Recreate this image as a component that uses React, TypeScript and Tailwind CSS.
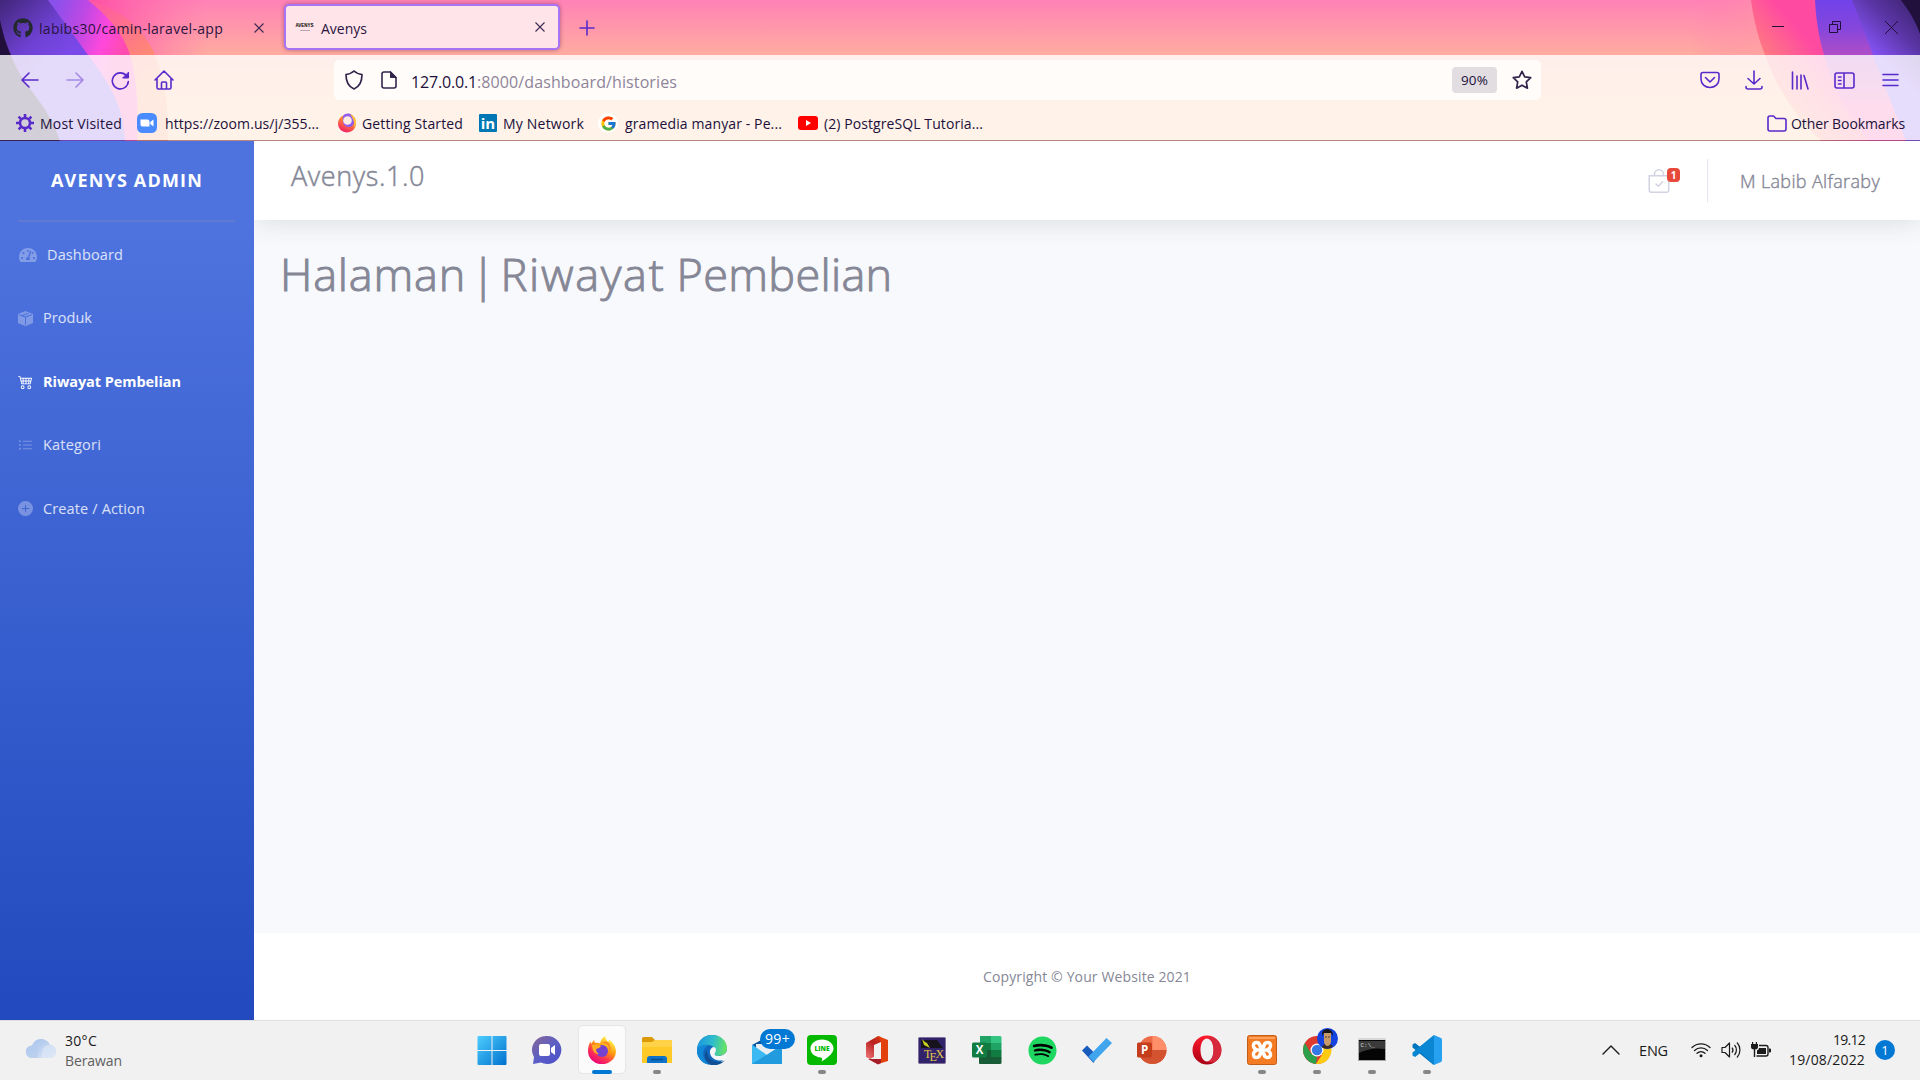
import { useLayoutEffect, useRef, type ReactNode } from "react";
import { FaGithub, FaSpotify, FaTachometerAlt } from "react-icons/fa";
import { BsBagCheck, BsBoxSeamFill, BsCart4, BsListUl, BsPlusCircleFill } from "react-icons/bs";
import { FcGoogle } from "react-icons/fc";

/* Spreads a single line of text over the width that its class gives it. */
function Fit({ children, className = "" }: { children: string; className?: string }) {
  const ref = useRef<HTMLSpanElement>(null);
  useLayoutEffect(() => {
    const inner = ref.current;
    const box = inner?.parentElement;
    if (!inner || !box) return;
    inner.style.letterSpacing = "0px";
    const gap = box.getBoundingClientRect().width - inner.getBoundingClientRect().width;
    inner.style.letterSpacing = `${gap / Math.max(1, children.length)}px`;
  }, [children]);
  return (
    <span className={`block shrink-0 whitespace-nowrap ${className}`}>
      <span ref={ref} className="inline-block">{children}</span>
    </span>
  );
}

function Wallpaper() {
  return (
    <svg className="absolute inset-0" width="1920" height="141" viewBox="0 0 1920 141">
      <defs>
        <linearGradient id="sky" x1="0" y1="0" x2="0" y2="1">
          <stop offset="0" stopColor="#ff82b6" />
          <stop offset=".39" stopColor="#ffaca0" />
          <stop offset=".75" stopColor="#ffc08a" />
          <stop offset="1" stopColor="#ffc08a" />
        </linearGradient>
        <linearGradient id="glowL" x1="90" y1="0" x2="210" y2="0" gradientUnits="userSpaceOnUse">
          <stop offset="0" stopColor="#ff4fa5" />
          <stop offset="1" stopColor="#ff6fae" stopOpacity="0" />
        </linearGradient>
        <linearGradient id="emberL" x1="100" y1="0" x2="160" y2="70" gradientUnits="userSpaceOnUse">
          <stop offset="0" stopColor="#ff5aa3" />
          <stop offset="1" stopColor="#ff9469" />
        </linearGradient>
        <linearGradient id="magenta" x1="50" y1="20" x2="125" y2="45" gradientUnits="userSpaceOnUse">
          <stop offset="0" stopColor="#8a50ec" />
          <stop offset=".4" stopColor="#c148e4" />
          <stop offset=".72" stopColor="#ff48dc" />
          <stop offset="1" stopColor="#ff4bb0" />
        </linearGradient>
        <linearGradient id="violet" x1="5" y1="0" x2="62" y2="60" gradientUnits="userSpaceOnUse">
          <stop offset="0" stopColor="#44287f" />
          <stop offset=".6" stopColor="#6e41d2" />
          <stop offset="1" stopColor="#7a48e8" />
        </linearGradient>
        <linearGradient id="glowR" x1="1690" y1="0" x2="1775" y2="0" gradientUnits="userSpaceOnUse">
          <stop offset="0" stopColor="#ff6fae" stopOpacity="0" />
          <stop offset="1" stopColor="#ffa0a0" />
        </linearGradient>
        <linearGradient id="emberR" x1="1755" y1="60" x2="1795" y2="25" gradientUnits="userSpaceOnUse">
          <stop offset="0" stopColor="#ff8578" />
          <stop offset="1" stopColor="#ff4aa2" />
        </linearGradient>
        <linearGradient id="violetR" x1="0" y1="0" x2="0" y2="141" gradientUnits="userSpaceOnUse">
          <stop offset="0" stopColor="#7142ea" />
          <stop offset=".2" stopColor="#8546dc" />
          <stop offset=".42" stopColor="#b64fc4" />
          <stop offset=".8" stopColor="#ff4fa5" />
        </linearGradient>
        <linearGradient id="nightR" x1="1875" y1="55" x2="1925" y2="5" gradientUnits="userSpaceOnUse">
          <stop offset="0" stopColor="#8452f2" />
          <stop offset=".5" stopColor="#5834a2" />
          <stop offset="1" stopColor="#3a2268" />
        </linearGradient>
      </defs>
      <path fill="url(#sky)" d="M0 0h1920v141H0z" />
      <path fill="url(#glowL)" d="M88 0h130v55H150z" />
      <path fill="url(#glowR)" opacity=".5" d="M1690 0h61l14 55h-75z" />
      <path fill="url(#emberL)" d="M88 0c34 9 56 30 67 55 10 25 14 55 13 86H60z" />
      <path fill="url(#magenta)" d="M48 0h40c24 20 36 36 42 55 6 20 9 50 7 86H60z" />
      <path fill="url(#violet)" d="M0 0h48l40 55c22 30 35 48 37 86H0z" />
      <path fill="#21103b" d="M0 20c3 14 6 24 11 35 12 34 35 44 49 86H0z" />
      <path fill="url(#emberR)" d="M1751 0c3 22 7 37 14 55 13 36 30 60 56 86h99V0z" />
      <path fill="url(#violetR)" d="M1815 0c1 20 4 38 9 55 11 38 25 62 46 86h50V0z" />
      <path fill="url(#nightR)" d="m1852 0 21 55 33 86h14V0z" />
      <path fill="#21103b" d="M1901 0c9 12 15 22 19 34V0z" />
    </svg>
  );
}

function Cross() {
  return <svg width="10" height="10" viewBox="0 0 10 10" stroke="#3b2a52" strokeWidth="1.1"><path d="m.5.5 9 9m0-9-9 9" /></svg>;
}

function Stroke({ w, h, children, className = "", color = "#592acb" }: { w: number; h: number; children: ReactNode; className?: string; color?: string }) {
  return (
    <svg className={`shrink-0 ${className}`} width={w} height={h} viewBox={`0 0 ${w} ${h}`} fill="none" stroke={color} strokeWidth="1.6" strokeLinecap="round" strokeLinejoin="round">
      {children}
    </svg>
  );
}

function TabStrip() {
  return (
    <div className="flex h-[55px] items-center text-[14px] text-[#2a1440]">
      <FaGithub className="ml-[13px] size-5 shrink-0 text-[#24292e]" />
      <Fit className="ml-[6px] w-[184px] pt-px">labibs30/camin-laravel-app</Fit>
      <div className="ml-[31px]"><Cross /></div>
      <div className="mb-px ml-5 flex h-[46px] w-[276px] shrink-0 items-center rounded-[5px] border-2 border-[#a774f5] bg-[#ffe5ea] shadow-[0_0_4px_rgba(80,20,60,.45)]">
        <span className="ml-[8px] flex w-[21px] flex-col items-center">
          <span className="font-['Liberation_Sans'] text-[4.5px] leading-[6px] font-bold text-black">AVENYS</span>
          <span className="mt-px h-px w-[10px] bg-[#b9a5ab]" />
        </span>
        <Fit className="ml-[6px] w-[46px] pt-[2px]">Avenys</Fit>
        <div className="ml-[168px]"><Cross /></div>
      </div>
      <Stroke w={16} h={16} className="ml-[19px]"><path d="M8 1v14M1 8h14" /></Stroke>
      <svg className="mb-px ml-auto" width="12" height="12" viewBox="0 0 12 12"><path d="M0 5.500h12" stroke="#21103b" /></svg>
      <svg className="mb-px ml-[45px]" width="12" height="12" viewBox="0 0 12 12" fill="none" stroke="#21103b"><path d="M.5 3.500h8v8h-8zM3.500 3.500v-3h8v8h-3" /></svg>
      <svg className="mr-[22px] mb-px ml-[44px]" width="13" height="13" viewBox="0 0 13 13" stroke="#21103b"><path d="m0 0 13 13M13 0 0 13" /></svg>
    </div>
  );
}

function NavBar() {
  return (
    <div className="flex h-[50px] items-center">
      <Stroke w={18} h={16} className="ml-[21px]"><path d="M17 8H1m7-7L1 8l7 7" /></Stroke>
      <Stroke w={18} h={16} className="ml-[27px] opacity-45"><path d="M1 8h16m-7-7 7 7-7 7" /></Stroke>
      <Stroke w={19} h={19} className="ml-[27px]"><path d="M15.500 4.800a8 8 0 1 0 1.800 5.700" /><path d="M17.500 1.500v5.500h-5.500z" fill="#592acb" strokeWidth="1" /></Stroke>
      <Stroke w={20} h={20} className="ml-[24px]"><path d="M1 10 10 1l9 9M3 8.500v9q0 1.500 1.500 1.500h11q1.500 0 1.500-1.500v-9M7.500 19v-6q0-1 1-1h3q1 0 1 1v6" /></Stroke>
      <div className="ml-[160px] flex h-10 w-[1207px] items-center rounded-[5px] bg-[#fffcfa]">
        <Stroke w={18} h={20} className="ml-[11px]" color="#32254b"><path d="M9 1c2 2 5 3 8 3.500 0 6-2 12-8 14.500C3 16.500 1 10.500 1 4.500 4 4 7 3 9 1z" strokeWidth="1.700" /></Stroke>
        <Stroke w={16} h={18} className="ml-[18px]" color="#32254b"><path d="M3 1h6.500L15 6.500V15q0 2-2 2H3q-2 0-2-2V3q0-2 2-2z" strokeWidth="1.600" /><path d="M9.500 1v5.500H15z" fill="#32254b" strokeWidth="1" /></Stroke>
        <div className="ml-[14px] flex pt-[3px] text-[16px]">
          <Fit className="w-[66px] text-[#21103b]">127.0.0.1</Fit>
          <Fit className="w-[200px] text-[#8d8499]">:8000/dashboard/histories</Fit>
        </div>
        <div className="ml-auto flex h-[26px] w-[45px] items-center justify-center rounded-[4px] bg-[#e2dde1] pt-px text-[13.5px] text-[#21103b]"><Fit className="w-[27px]">90%</Fit></div>
        <Stroke w={20} h={20} className="mr-[9px] ml-[15px]" color="#32254b"><path d="m10 1.300 2.700 5.600 6 .8-4.400 4.200 1.100 6.300-5.400-3-5.400 3 1.100-6.300-4.400-4.200 6-.8z" strokeWidth="1.700" /></Stroke>
      </div>
      <Stroke w={20} h={18} className="ml-[159px]"><path d="M3 1.500h14q2 0 2 2V8c0 5-4 8.500-9 8.500S1 13 1 8V3.500q0-2 2-2zM5.500 6.500 10 11l4.500-4.500" /></Stroke>
      <Stroke w={18} h={20} className="ml-[25px]"><path d="M9 1v13M3 8.500 9 14l6-5.500M1 16.500V17q0 2 2 2h12q2 0 2-2v-.5" /></Stroke>
      <Stroke w={18} h={19} className="ml-[28px]"><path d="M1.500 1v17M6 5v13M10 4v14M13 4.500 17 18" /></Stroke>
      <Stroke w={21} h={17} className="ml-[25px]"><path d="M3 1h15q2 0 2 2v11q0 2-2 2H3q-2 0-2-2V3q0-2 2-2zM10 1v15M4.500 5H7M4.500 8.500H7M4.500 12H7" /></Stroke>
      <Stroke w={17} h={14} className="mb-px ml-[27px]"><path d="M1 1.500h15M1 7h15M1 12.500h15" /></Stroke>
    </div>
  );
}

function GearIcon() {
  return (
    <svg width="18" height="18" viewBox="0 0 18 18" fill="none" stroke="#592acb">
      <circle cx="9" cy="9" r="5" strokeWidth="2.600" />
      <path d="M9 0v3m0 12v3M0 9h3m12 0h3M2.600 2.600l2.200 2.200m8.400 8.400 2.200 2.200m0-12.800-2.200 2.200m-8.400 8.400-2.200 2.200" strokeWidth="2.600" />
    </svg>
  );
}

function Firefox({ size }: { size: number }) {
  return (
    <svg width={size} height={size} viewBox="0 0 28 28">
      <defs>
        <linearGradient id="fox" x1="22" y1="3" x2="7" y2="26" gradientUnits="userSpaceOnUse">
          <stop offset="0" stopColor="#fff44f" /><stop offset=".4" stopColor="#ff980e" /><stop offset=".7" stopColor="#ff3750" /><stop offset="1" stopColor="#eb0878" />
        </linearGradient>
      </defs>
      <path fill="url(#fox)" d="M17.500 0c-.5 3 1 4.500 3 6l.5-2.500c4 3 7 7 7 12A14 13 0 0 1 0 15c0-4 1-7 2.500-9.500L3 8l3-4 1 3c2-.6 4 0 5 .500C12.500 4 15 1 17.500 0z" />
      <circle cx="14" cy="15" r="6" fill="#7542d0" />
      <path fill="#ffad22" d="M4 9c3-1 7-.5 9 1-1 2-3 2-5 3 0 2 1 4 3 5-4 1-7-4-7-9z" />
      <path fill="#ff8d22" d="M14 7c6 0 8 5 7 9 2-2 2-6 0-9-2-2-5-2-7 0z" />
    </svg>
  );
}

function GettingStartedIcon() {
  return (
    <svg width="18" height="20" viewBox="0 0 18 20">
      <defs><linearGradient id="gs" x1="14" y1="1" x2="5" y2="19" gradientUnits="userSpaceOnUse"><stop offset="0" stopColor="#ffca2c" /><stop offset=".45" stopColor="#ff8035" /><stop offset="1" stopColor="#f11c68" /></linearGradient></defs>
      <path fill="url(#gs)" d="M4 3C1 5 0 8 0 11a9 8.500 0 0 0 18 0c0-5-3-9-7-10z" />
      <path fill="#8f5cf0" d="M5 3c3-4 10-3 11 3 1 4-1 8-5 8-5 0-7-4-6-11z" />
      <circle cx="9.500" cy="7.500" r="4.300" fill="#ffe9e0" />
      <path fill="#ffbd3a" d="M12 1c6 2 8 9 4 14 1-5-1-10-4-14z" />
    </svg>
  );
}

function BookmarksBar() {
  return (
    <div className="flex h-[35px] items-center pt-px text-[14px] text-[#21103b]">
      <div className="ml-4 shrink-0"><GearIcon /></div>
      <Fit className="ml-[6px] w-[82px] pt-px">Most Visited</Fit>
      <svg className="ml-[15px] shrink-0" width="20" height="20" viewBox="0 0 20 20"><rect width="20" height="20" rx="5.500" fill="#4a8cff" /><path fill="#fff" d="M3.500 6.500h7q2 0 2 2v5h-7q-2 0-2-2zM13.300 9l3.200-2.500v7L13.300 11z" /></svg>
      <Fit className="ml-[8px] w-[154px] pt-px">https://zoom.us/j/355...</Fit>
      <div className="mb-px ml-[19px] shrink-0"><GettingStartedIcon /></div>
      <Fit className="ml-[6px] w-[101px] pt-px">Getting Started</Fit>
      <span className="ml-[16px] flex size-[18px] shrink-0 items-center justify-center rounded-[1px] bg-[#0077b5] font-['Open_Sans'] text-[15px] leading-none font-bold text-white">in</span>
      <Fit className="ml-[6px] w-[81px] pt-px">My Network</Fit>
      <span className="ml-[14px] flex size-5 shrink-0 items-center justify-center rounded-full bg-white"><FcGoogle className="size-[17px]" /></span>
      <Fit className="ml-[7px] w-[157px] pt-px">gramedia manyar - Pe...</Fit>
      <svg className="ml-[16px] shrink-0" width="20" height="14" viewBox="0 0 20 14"><rect width="20" height="14" rx="3" fill="#f00" /><path fill="#fff" d="m8 4 5 3-5 3z" /></svg>
      <Fit className="ml-[6px] w-[159px] pt-px">(2) PostgreSQL Tutoria...</Fit>
      <Stroke w={20} h={17} className="mr-[4px] ml-auto"><path d="M3 1h3.500L9 3.500h8q2 0 2 2V14q0 2-2 2H3q-2 0-2-2V3q0-2 2-2z" /></Stroke>
      <Fit className="mr-[15px] w-[114px] pt-px">Other Bookmarks</Fit>
    </div>
  );
}

function Sidebar() {
  const row = "flex h-[63.5px] items-center text-[14.5px] text-white/80";
  const icon = "size-[15px] shrink-0 text-white/30";
  return (
    <aside className="flex w-[254px] shrink-0 flex-col bg-[linear-gradient(180deg,#4e73df_10%,#224abe_100%)] px-[18px]">
      <div className="flex h-[79px] items-center justify-center text-[18px] font-bold text-white"><Fit className="w-[152px]">AVENYS ADMIN</Fit></div>
      <div className="mr-px h-[2px] bg-[#5f7ad0]" />
      <nav className="mt-px">
        <div className={row}><FaTachometerAlt className="ml-px size-[18px] shrink-0 text-white/30" /><Fit className="ml-[10px] w-[76px]">Dashboard</Fit></div>
        <div className={row}><BsBoxSeamFill className={icon} /><Fit className="ml-[10px] w-[49px]">Produk</Fit></div>
        <div className="flex h-[63.5px] items-center text-[14.5px] font-bold text-white"><BsCart4 className="size-[15px] shrink-0" /><Fit className="ml-[10px] w-[138px]">Riwayat Pembelian</Fit></div>
        <div className={row}><BsListUl className={icon} /><Fit className="ml-[10px] w-[58px]">Kategori</Fit></div>
        <div className={row}><BsPlusCircleFill className={icon} /><Fit className="ml-[10px] w-[102px]">Create / Action</Fit></div>
      </nav>
    </aside>
  );
}

function Page() {
  return (
    <div className="flex h-[879px]">
      <Sidebar />
      <div className="flex flex-1 flex-col overflow-hidden bg-[#f8f9fc] text-[#858796]">
        <header className="flex h-[79px] shrink-0 items-center bg-white shadow-[0_2px_25px_rgba(58,59,69,.15)]">
          <Fit className="mb-[8px] ml-[37px] w-[134px] text-[27px] font-light [-webkit-text-stroke:0.5px_#858796]">Avenys.1.0</Fit>
          <div className="relative ml-auto flex h-6 w-[33px] shrink-0">
            <BsBagCheck className="size-6 text-[#d1d3e2]" />
            <span className="absolute top-[-1px] right-0 flex h-[14px] w-[13px] items-center justify-center rounded-[4px] bg-[#e74a3b] text-[10px] leading-none font-bold text-white">1</span>
          </div>
          <div className="ml-[27px] h-[43px] w-px bg-[#e3e6f0]" />
          <Fit className="mr-[40px] ml-[32px] w-[140px] pt-px text-[18px] font-light [-webkit-text-stroke:0.4px_#858796]">M Labib Alfaraby</Fit>
        </header>
        <main className="flex-1">
          <h1 className="mt-[21px] ml-[26px] flex text-[45px] leading-[66px] font-light [-webkit-text-stroke:1px_#858796]">
            <Fit className="w-[186px]">Halaman</Fit>
            <span className="w-[34.5px] text-center">|</span>
            <Fit className="w-[165px]">Riwayat</Fit>
            <Fit className="ml-[11px] w-[216px]">Pembelian</Fit>
          </h1>
        </main>
        <footer className="flex h-[87px] shrink-0 items-center justify-center bg-white text-[14px]"><Fit className="w-[208px]">Copyright © Your Website 2021</Fit></footer>
      </div>
    </div>
  );
}

function Ico({ children }: { children: ReactNode }) {
  return <svg width="30" height="30" viewBox="0 0 30 30">{children}</svg>;
}

function AppButton({ children, mark, active }: { children: ReactNode; mark?: boolean; active?: boolean }) {
  return (
    <div className="relative flex h-full w-[55px] items-center justify-center">
      {active && <span className="absolute top-[4px] left-[3.5px] h-[49px] w-12 rounded-[5px] border border-[#e6e6e6] bg-[#fbfbfb]" />}
      <span className="relative mb-px">{children}</span>
      {mark && <span className="absolute top-[49px] left-[23.5px] h-1 w-2 rounded-full bg-[#868686]" />}
      {active && <span className="absolute top-[49px] left-[17.5px] h-1 w-5 rounded-full bg-[#0078d4]" />}
    </div>
  );
}

function TaskbarApps() {
  return (
    <div className="ml-[342.500px] flex h-full">
      <AppButton><Ico>
        <defs><linearGradient id="win" x1="0" y1="0" x2="30" y2="30" gradientUnits="userSpaceOnUse"><stop stopColor="#4fd0ff" /><stop offset="1" stopColor="#0070ce" /></linearGradient></defs>
        <path fill="url(#win)" d="M.5 2q0-1 1-1h13v14H.5zM15.500 1h13q1 0 1 1v13h-14zM.5 16h14v14h-13q-1 0-1-1zM15.500 16h14v13q0 1-1 1h-13z" />
      </Ico></AppButton>
      <AppButton><Ico>
        <defs><linearGradient id="chat" x1="4" y1="2" x2="26" y2="28" gradientUnits="userSpaceOnUse"><stop stopColor="#82659c" /><stop offset=".5" stopColor="#5c5fc4" /><stop offset="1" stopColor="#4d50c8" /></linearGradient></defs>
        <path fill="url(#chat)" d="M15 1a14 14 0 1 1-6 26.500L1 29l1-7A14 14 0 0 1 15 1z" /><path fill="#fff" d="M7 11q0-2 2-2h7q2 0 2 2v8q0 2-2 2H9q-2 0-2-2zM19 13l4-3v10l-4-3z" />
      </Ico></AppButton>
      <AppButton active><Firefox size={28} /></AppButton>
      <AppButton mark><Ico>
        <path fill="#dc9a08" d="M0 3.500Q0 2 1.500 2H10l3 3v5H0z" /><path fill="#ffc928" d="M0 7h10l3-2h16q1 0 1 1v22H0z" /><path fill="#ffd95c" d="M0 7h10l3-2h16q1 0 1 1v6H0z" opacity=".6" /><path fill="#0f72c9" d="M5 28v-4q0-3 3-3h14q3 0 3 3v4z" /><path d="M9 24.500h12" stroke="#064f91" strokeWidth="1.500" />
      </Ico></AppButton>
      <AppButton><Ico>
        <defs><linearGradient id="edge" x1="2" y1="8" x2="30" y2="12" gradientUnits="userSpaceOnUse"><stop stopColor="#1f9bde" /><stop offset=".5" stopColor="#30bec9" /><stop offset="1" stopColor="#6de65b" /></linearGradient></defs>
        <circle cx="15" cy="15" r="15" fill="#1268bd" /><path fill="url(#edge)" d="M0 14C1 5 7 0 15 0c9 0 15 6 15 13 0 5-4 8-9 8-3 0-4-1-3-3 2-4-2-8-7-8-4 0-8 1-11 4z" /><path fill="#1187d6" d="M0 14c3-4 8-5 12-4-5 2-7 8-5 13 1 3 4 6 6 7C4 29-1 21 0 14z" /><path fill="#114f94" d="M10 15c-1 7 5 12 12 12 3 0 5-1 6-2-3 4-8 6-14 5-7-4-8-11-4-15z" /><path fill="#f3f5f6" d="M18 18c-1 2 0 3 3 3 4 0 8-2 9-6v8l-3 2c-6 2-13-1-14-7-.5-3 1-5 3-6 3 0 4 3 2 6z" />
      </Ico></AppButton>
      <AppButton>
        <Ico><path fill="#07559c" d="m0 10 15-8 15 8v4H0z" /><path fill="#e8edf2" d="M4 9h22v10H4z" /><path fill="#3bb9f2" d="M0 9.500 15 20l15-10.500V29H0z" /><path fill="#1688d3" d="M0 29 30 10v19z" opacity=".65" /></Ico>
        <span className="absolute -top-[6px] left-2 flex h-5 w-[35px] items-center justify-center rounded-full bg-[#0078d4] text-[14px] leading-none text-white"><Fit className="w-[25px]">99+</Fit></span>
      </AppButton>
      <AppButton mark>
        <Ico><rect width="30" height="30" rx="4" fill="#04b900" /><path fill="#fff" d="M15 4.500c6.500 0 11.500 4 11.500 9 0 4-4 8-12 13 1-2 .8-3.500-.5-4-6-.5-10.500-4-10.500-9 0-5 5-9 11.500-9z" /><text x="15" y="16" textAnchor="middle" fontFamily="Open Sans" fontWeight="800" fontSize="6.500" fill="#04b900">LINE</text></Ico>
      </AppButton>
      <AppButton><Ico>
        <defs><linearGradient id="office" x1="4" y1="24" x2="22" y2="2" gradientUnits="userSpaceOnUse"><stop stopColor="#ef7a7a" /><stop offset=".6" stopColor="#b92020" /><stop offset="1" stopColor="#d93a10" /></linearGradient></defs>
        <path fill="url(#office)" d="M4 8 16 1l3 1v5l-7 3v12l-4 2-4-2z" /><path fill="#e2400c" d="m16 1 10 4v21l-10 3v-5h3V7z" /><path fill="#a51d28" d="m6 24 13 0v4l-3 1.500z" />
      </Ico></AppButton>
      <AppButton><Ico>
        <rect x="1.500" y="2.500" width="27" height="26" rx="1" fill="#31226c" stroke="#80709c" /><path fill="#17131e" d="M4 5h16l6 8H4z" /><path fill="#c8cf20" d="m5 4 2 6 6 3-3-5-2-1z" /><text x="7" y="23" fontFamily="Liberation Serif" fontSize="12" fill="#e5c945">T</text><text x="12.500" y="26" fontFamily="Liberation Serif" fontSize="12" fill="#e5c945">E</text><text x="18.500" y="23" fontFamily="Liberation Serif" fontSize="12" fill="#e5c945">X</text>
      </Ico></AppButton>
      <AppButton><Ico>
        <path fill="#21a366" d="M8 1h11v7H8z" /><path fill="#33c481" d="M19 1h9q1.500 0 1.500 1.500V8H19z" /><path fill="#107c41" d="M8 8h11v7H8z" /><path fill="#21a366" d="M19 8h10.500v7H19z" /><path fill="#185c37" d="M7 15h12v14H8q-1 0-1-1z" /><path fill="#107c41" d="M19 15h10.500v7H19z" /><path fill="#185c37" d="M19 22h10.500v6q0 1-1.500 1h-9z" /><rect y="7.500" width="15" height="15" rx="1.500" fill="#107c41" /><text x="7.500" y="19" textAnchor="middle" fontFamily="Open Sans" fontWeight="700" fontSize="11.500" fill="#fff">X</text>
      </Ico></AppButton>
      <AppButton><span className="flex size-[29px] items-center justify-center"><span className="flex size-[25px] items-center justify-center rounded-full bg-black"><FaSpotify className="size-[29px] shrink-0 text-[#1ed760]" /></span></span></AppButton>
      <AppButton><Ico><path fill="#195abd" d="m0 15.500 5-5 10.500 10.500-4 7z" /><path fill="#41a5ee" d="m11.500 27-5-5.500L24.500 3 30 8z" /></Ico></AppButton>
      <AppButton><Ico>
        <circle cx="15.500" cy="15" r="14" fill="#ed6c47" /><path fill="#ff8f6b" d="M15.500 1a14 14 0 0 1 14 14h-14z" /><path fill="#d35230" d="M1.500 15h28a14 14 0 0 1-28 0z" /><rect y="7.500" width="15" height="15" rx="1.500" fill="#c43e1c" /><text x="7.500" y="19" textAnchor="middle" fontFamily="Open Sans" fontWeight="700" fontSize="11.500" fill="#fff">P</text>
      </Ico></AppButton>
      <AppButton><Ico>
        <defs><linearGradient id="opera" x1="0" y1="0" x2="0" y2="1"><stop stopColor="#ff1b2d" /><stop offset="1" stopColor="#a70014" /></linearGradient></defs>
        <path fillRule="evenodd" fill="url(#opera)" d="M15 .5a14.500 14.500 0 1 0 0 29 14.500 14.500 0 0 0 0-29zM15 3.500c4 0 6.500 5 6.500 11.500S19 26.500 15 26.500 8.500 21.500 8.500 15 11 3.500 15 3.500z" /><path fill="#d6293b" d="M15 3.500c3-2 6-2 9 .5 7 6 7 16 0 22-3 2-6 2-9 .5 4 0 6.500-5 6.500-11.500S19 3.500 15 3.500z" />
      </Ico></AppButton>
      <AppButton mark><Ico>
        <rect x=".5" y=".5" width="29" height="29" rx="2" fill="#f47b23" stroke="#c45d18" /><path d="M2 3h26" stroke="#ffad73" strokeWidth="1.500" /><path d="M9 15h12M9 14.500c-4-2.500-3-7 .5-7 3 0 3.500 2 3.500 4h4c0-2 .5-4 3.500-4 3.500 0 4.500 4.500.5 7M9 15.500c-4 2.500-3 7 .5 7 3 0 3.500-2 3.500-4h4c0 2 .5 4 3.500 4 3.500 0 4.500-4.500.5-7" fill="none" stroke="#fff" strokeWidth="3.300" strokeLinecap="round" strokeLinejoin="round" />
      </Ico></AppButton>
      <AppButton mark>
        <Ico><circle cx="15" cy="15" r="14" fill="#de3b2f" /><path fill="#2da04b" d="M2.900 8 9 18.500 15 22l-1 7A14 14 0 0 1 2.900 8z" /><path fill="#fdcb12" d="M15 9h13a14 14 0 0 1-14 20l7-11z" /><circle cx="15" cy="15" r="6.500" fill="#fff" /><circle cx="15" cy="15" r="5.200" fill="#3578e5" /></Ico>
        <svg className="absolute -top-[7px] left-[14.5px]" width="21" height="21" viewBox="0 0 21 21"><circle cx="10.500" cy="10.500" r="10.500" fill="#1643e0" /><path fill="#3a2c2a" d="M5 19.500q0-3.500 5-3.500t6 2.500q-5 4-11 1z" /><path fill="#c89a68" d="M7 5h7v9q-1 4-3.500 4T7 14z" /><path fill="#171516" d="M5 8q-1-6 5-7 6 0 6 7l-2-3H7z" /><path d="M8 9h2m1 0h2" stroke="#5a3a25" /></svg>
      </AppButton>
      <AppButton mark><Ico>
        <rect x="1.500" y="3.500" width="27" height="22" fill="#050505" stroke="#a8a8a8" /><path fill="#3a3a3a" d="M2 6h26v8Q14 12 2 18z" /><path fill="#d7d7d7" d="M1 3h28v2H1z" /><text x="3.500" y="11.500" fontFamily="Liberation Mono" fontSize="6" fill="#ddd">C:\_</text>
      </Ico></AppButton>
      <AppButton mark><Ico>
        <path fill="#0076be" d="M22 0 9 12.500 3 8 .5 9.500v3l21 17.500V22L8 12z" /><path fill="#0a86d2" d="M22 30 9 17.500 3 22 .5 20.500v-3L22 0v8z" /><path fill="#26a0f1" d="m22 0 7 3q1 .5 1 2v20q0 1.500-1 2l-7 3z" />
      </Ico></AppButton>
    </div>
  );
}

function Taskbar() {
  return (
    <div className="flex h-[60px] items-center border-t border-[#dedede] bg-[#f1f1f1] text-[14px] text-[#1b1b1b]">
      <svg className="mb-[5px] ml-[26px] shrink-0" width="30" height="20" viewBox="0 0 30 20">
        <defs><linearGradient id="cl" x1="0" y1="0" x2="1" y2="1"><stop stopColor="#a3bfeb" /><stop offset="1" stopColor="#dbe7f6" /></linearGradient></defs>
        <path fill="url(#cl)" d="M6 20a6 6 0 0 1 0-12.500C8 3 11 1 15 1s8 2.500 9 6c8 0 8 13 0 13z" />
        <path fill="#b4cbed" d="M2 9c6-3 10 0 12 3-1-2-2 5-3 8H6C0 20-2 13 2 9z" opacity=".6" />
        <path fill="#dfe9f6" d="M15 20c2 0-2-12 8-13 9 0 9 13 1 13z" opacity=".6" />
      </svg>
      <div className="ml-[9px] flex w-[57px] flex-col leading-5">
        <Fit className="w-[32px]">30°C</Fit>
        <Fit className="w-[57px] text-[#606060]">Berawan</Fit>
      </div>
      <TaskbarApps />
      <Stroke w={18} h={10} className="mb-px ml-[147.500px]" color="#1b1b1b"><path d="m1 9 8-8 8 8" strokeWidth="1.400" /></Stroke>
      <Fit className="ml-[19px] w-[29px] text-[14.5px]">ENG</Fit>
      <svg className="mb-px ml-[23px] shrink-0" width="20" height="16" viewBox="0 0 20 16" fill="none" stroke="#1b1b1b" strokeWidth="1.300" strokeLinecap="round"><path d="M1 5.500a13 13 0 0 1 18 0M3.500 8.500a9.500 9.500 0 0 1 13 0M6 11.300a6 6 0 0 1 8 0" /><circle cx="10" cy="13.700" r="1.500" fill="#1b1b1b" stroke="none" /></svg>
      <svg className="mb-px ml-[10px] shrink-0" width="20" height="18" viewBox="0 0 20 18" fill="none" stroke="#1b1b1b" strokeWidth="1.200" strokeLinejoin="round"><path d="M1 6.500h3L8.500 2v14L4 11.500H1zM11 6.500a4 4 0 0 1 0 5M13.500 4a7.500 7.500 0 0 1 0 10M16 1.500a11 11 0 0 1 0 15" /></svg>
      <svg className="mb-px ml-[10px] shrink-0" width="20" height="16" viewBox="0 0 20 16" fill="none" stroke="#1b1b1b" strokeWidth="1.400"><path d="M8 3.500h7q2 0 2 2V12q0 2-2 2H5.500M3.500 7v8" /><path fill="#1b1b1b" stroke="none" d="M1 0h1.200v2h2.600V0H6v2h1v3Q7 7.500 3.500 7.500T0 5V2h1zM8 6h7v6H6V8.500q2-1 2-2.500zM18 6.500h1q1 0 1 1v2q0 1-1 1h-1z" /></svg>
      <div className="mb-[2px] ml-[18px] flex w-[76px] shrink-0 flex-col items-end text-[14px] leading-5">
        <Fit className="w-[32px]">19.12</Fit>
        <Fit className="w-[76px]">19/08/2022</Fit>
      </div>
      <span className="mb-px ml-[10px] flex size-5 shrink-0 items-center justify-center rounded-full bg-[#0078d4] text-[13px] leading-none text-white">1</span>
    </div>
  );
}

export default function App() {
  return (
    <div className="h-[1080px] w-[1920px] overflow-hidden bg-white font-['Open_Sans','Noto_Sans',sans-serif]">
      <div className="relative h-[141px] overflow-hidden">
        <Wallpaper />
        <div className="relative">
          <TabStrip />
          <div className="bg-white/80">
            <NavBar />
            <BookmarksBar />
          </div>
          <div className="h-px bg-[#5a4070]/45" />
        </div>
      </div>
      <Page />
      <Taskbar />
    </div>
  );
}
